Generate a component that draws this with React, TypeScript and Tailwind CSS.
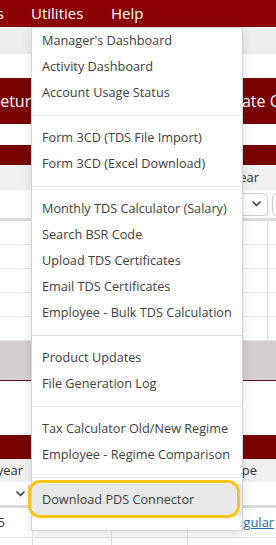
import React from "react";

// utilities dropdown entries, null = divider
const menuItems: (string | null)[] = [
  "Manager's Dashboard",
  "Activity Dashboard",
  "Account Usage Status",
  null,
  "Form 3CD (TDS File Import)",
  "Form 3CD (Excel Download)",
  null,
  "Monthly TDS Calculator (Salary)",
  "Search BSR Code",
  "Upload TDS Certificates",
  "Email TDS Certificates",
  "Employee - Bulk TDS Calculation",
  null,
  "Product Updates",
  "File Generation Log",
  null,
  "Tax Calculator Old/New Regime",
  "Employee - Regime Comparison",
];

const Chevron = () => (
  <svg width="9" height="6" viewBox="0 0 9 6" fill="none">
    <path d="M1 1l3.5 3.5L8 1" stroke="#444" strokeWidth="1.7" strokeLinecap="round" strokeLinejoin="round" />
  </svg>
);

function UtilitiesMenu() {
  return (
    <>
      <div className="absolute left-[31px] top-[27px] w-[212px] bg-white border border-[#d4d4d4] shadow-[0_4px_10px_rgba(0,0,0,0.12)] pb-[14px] text-[12.7px] text-[#404040]">
        {menuItems.map((item, i) =>
          item === null ? (
            <div key={i} className="my-[9px] h-px bg-[#e3e3e3]" />
          ) : (
            <div key={i} className="h-[26px] flex items-center pl-[10px] whitespace-nowrap">
              {item}
            </div>
          )
        )}
        <div className="mt-[9px] mb-[6px] h-px bg-[#e3e3e3]" />
        <div className="h-[32px] flex items-center pl-[10px] bg-[#e8e8e8] whitespace-nowrap">
          Download PDS Connector
        </div>
      </div>
      {/* highlight ring drawn over the screenshot */}
      <div className="absolute left-[28px] top-[480px] w-[212px] h-[38px] border-[3px] border-[#f5c518] rounded-[12px]" />
    </>
  );
}

function Page() {
  return (
    <div className="w-[276px] text-[13px] text-[#333] whitespace-nowrap">
      {/* top nav */}
      <nav className="h-[27px] bg-[#8b0000] text-white text-[15px] flex items-center">
        <div className="w-[4px] shrink-0 flex justify-end overflow-hidden">
          <span>Reports</span>
        </div>
        <div className="w-[27px] shrink-0" />
        <span className="w-[80px] shrink-0">Utilities</span>
        <span>Help</span>
      </nav>
      <div className="h-[27px] bg-[#eeeeee]" />
      <div className="h-[24px]" />

      {/* action banner */}
      <div className="h-[46px] bg-[#790000] text-white text-[16px] flex items-center overflow-hidden">
        <div className="w-[41px] shrink-0 flex justify-end overflow-hidden">
          <span>File Return</span>
        </div>
        <div className="w-[155px] shrink-0" />
        <span>Generate Challan</span>
      </div>
      <div className="h-[21px]" />

      {/* first panel */}
      <div className="h-[20px] bg-[#790000]" />
      <div className="h-[25px] bg-[#f1f1f1] flex items-center">
        <div className="w-[259px] shrink-0 flex justify-end overflow-hidden">
          <span>Financial Year</span>
        </div>
      </div>
      <div className="h-[28px] flex items-center overflow-hidden">
        <div className="ml-[140px] w-[128px] h-[23px] shrink-0 border border-[#cfcfcf] rounded-[4px] flex items-center justify-end pr-[6px]">
          <Chevron />
        </div>
        <div className="ml-[4px] w-[40px] h-[23px] shrink-0 border border-[#cfcfcf] rounded-[4px]" />
      </div>
      <div className="h-[3px] bg-[#dcdcdc]" />
      {[0, 1, 2, 3, 4].map((r) => (
        <div key={r} className="h-[24px] flex border-b border-[#e4e4e4]">
          <div className="w-[268px] shrink-0 border-r border-[#e0e0e0]" />
        </div>
      ))}
      <div className="h-[40px] bg-[#d4d0d0] border-b border-[#5c1010]" />
      <div className="h-[54px]" />

      {/* second panel */}
      <div className="h-[24px] bg-[#790000]" />
      <div className="h-[23px] bg-[#f1f1f1] flex items-center">
        <div className="w-[23px] shrink-0 flex justify-end overflow-hidden">
          <span>Financial year</span>
        </div>
        <div className="w-[205px] shrink-0" />
        <span>Type</span>
      </div>
      <div className="h-[23px] flex items-center overflow-hidden">
        <div className="w-[29px] h-[20px] shrink-0 border-r border-[#cfcfcf] flex items-center justify-end pr-[3px]">
          <Chevron />
        </div>
      </div>
      <div className="h-[3px] bg-[#dcdcdc]" />
      <div className="h-[30px] flex items-center border-b border-[#e4e4e4]">
        <div className="w-[33px] h-full shrink-0 border-r border-[#e0e0e0] flex items-center justify-end pr-[27px] overflow-hidden">
          <span>2024-25</span>
        </div>
        <div className="w-[79px] h-full shrink-0 border-r border-[#e0e0e0]" />
        <div className="w-[76px] h-full shrink-0 border-r border-[#e0e0e0]" />
        <a className="ml-[40px] text-[#1f6fb2] underline">Regular</a>
      </div>
      <div className="h-[20px] flex">
        <div className="w-[33px] shrink-0 border-r border-[#e0e0e0]" />
        <div className="w-[79px] shrink-0 border-r border-[#e0e0e0]" />
        <div className="w-[76px] shrink-0 border-r border-[#e0e0e0]" />
      </div>
    </div>
  );
}

export default function App() {
  return (
    <div className="relative w-[276px] h-[545px] overflow-hidden bg-white font-['Open_Sans',sans-serif]">
      <Page />
      <UtilitiesMenu />
    </div>
  );
}
